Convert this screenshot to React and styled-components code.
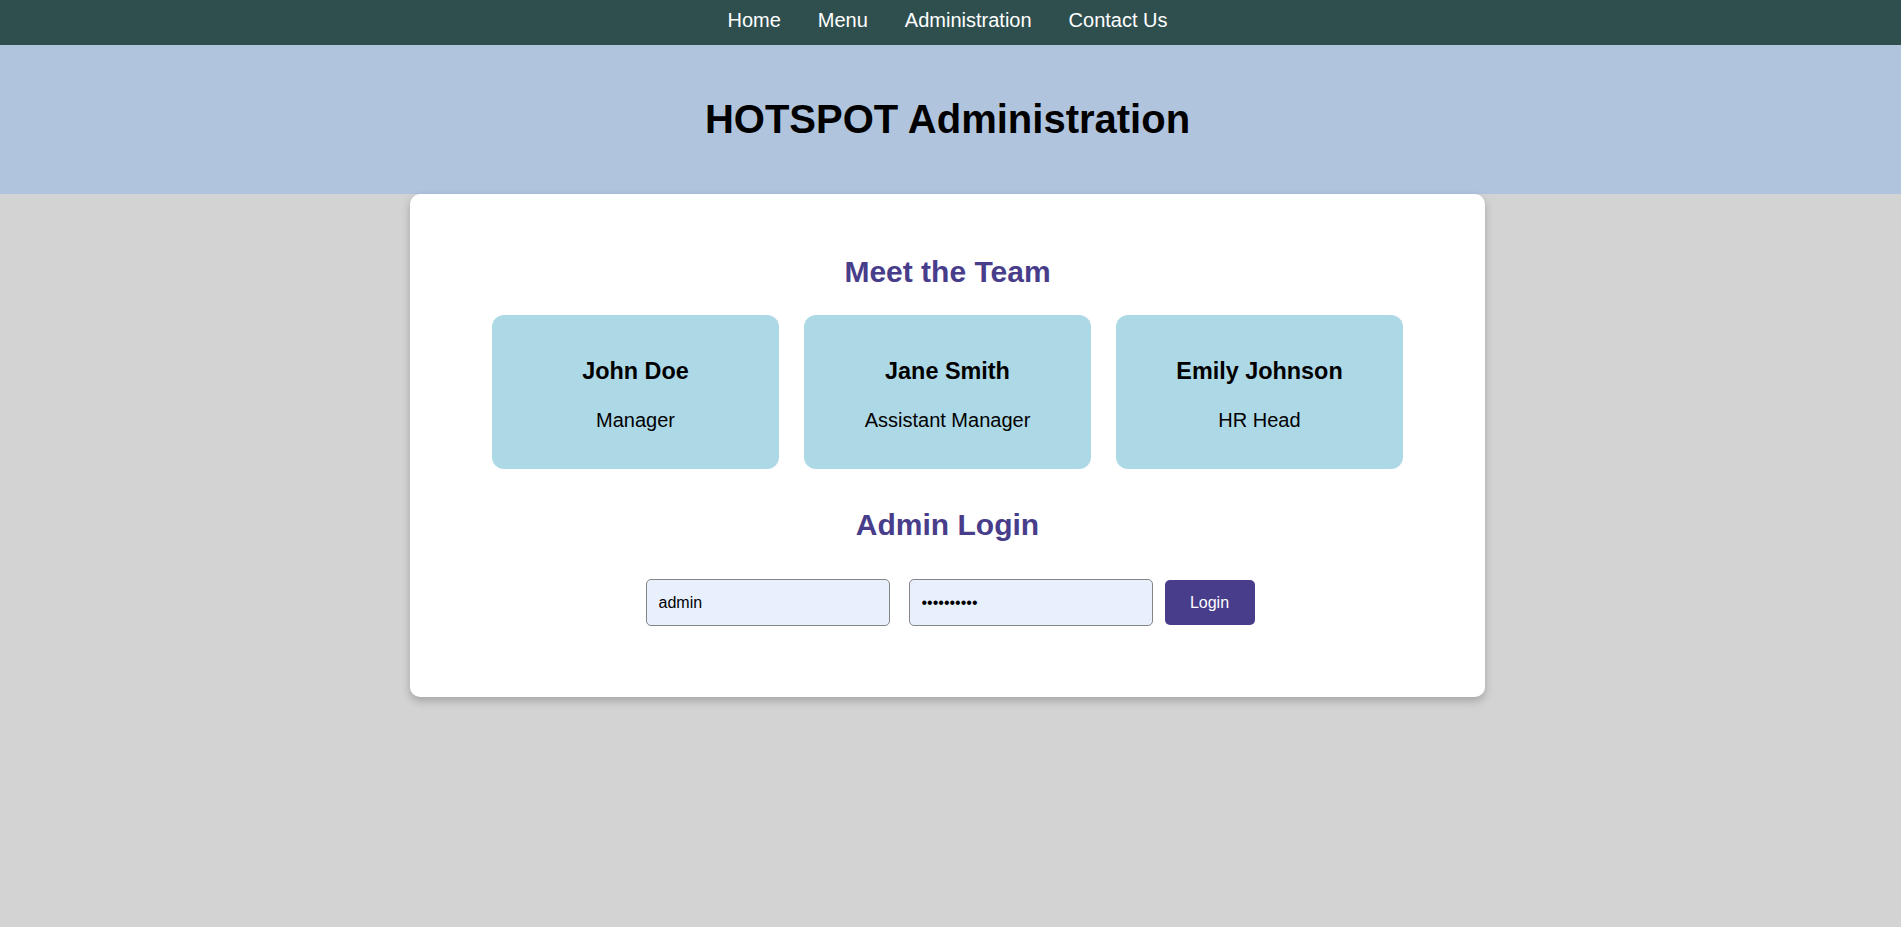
import React from "react";
import styled, { createGlobalStyle } from "styled-components";

const GlobalStyle = createGlobalStyle`
  html, body {
    margin: 0;
    padding: 0;
    min-height: 100%;
    background: #d3d3d3;
  }
  body {
    font-family: "Liberation Sans", Arial, sans-serif;
    color: #000;
  }
`;

const Page = styled.div`
  min-height: 927px;
  background: #d3d3d3;
`;

const NavBar = styled.nav`
  height: 45px;
  box-sizing: border-box;
  padding: 9px 6px 0 0;
  background: #2f4f4f;
  display: flex;
  justify-content: center;
  gap: 37px;
`;

const NavLink = styled.a`
  color: #ffffff;
  font-size: 20px;
  line-height: 23px;
  text-decoration: none;
  cursor: pointer;
`;

const Header = styled.header`
  background: #b0c4de;
  padding: 51px 6px 52px 0;
  text-align: center;
`;

const Title = styled.h1`
  margin: 0;
  font-size: 40px;
  line-height: 46px;
  font-weight: bold;
`;

const Main = styled.main`
  display: flex;
  justify-content: center;
  padding-right: 6px;
`;

const Panel = styled.section`
  width: 1075px;
  box-sizing: border-box;
  background: #ffffff;
  border-radius: 10px;
  box-shadow: 0 4px 8px rgba(0, 0, 0, 0.22);
  padding: 61px 0 71px;
  display: flex;
  flex-direction: column;
  align-items: center;
`;

const SectionTitle = styled.h2`
  margin: ${(p) => p.$top || 0}px 0 0;
  font-size: 30px;
  line-height: 34px;
  font-weight: bold;
  color: #483d8b;
`;

const TeamRow = styled.div`
  margin-top: 26px;
  display: flex;
  gap: 25px;
`;

const MemberCard = styled.div`
  width: 287px;
  height: 154px;
  box-sizing: border-box;
  background: #add8e6;
  border-radius: 12px;
  padding: 43px 10px 0;
  display: flex;
  flex-direction: column;
  align-items: center;
`;

const MemberName = styled.h3`
  margin: 0 0 24px;
  font-size: 23.4px;
  line-height: 27px;
  font-weight: bold;
`;

const MemberRole = styled.p`
  margin: 0;
  font-size: 20px;
  line-height: 23px;
`;

const LoginRow = styled.form`
  margin-top: 37px;
  padding-left: 5px;
  display: flex;
  align-items: center;
`;

const TextInput = styled.input`
  width: 244px;
  height: 47px;
  box-sizing: border-box;
  padding: 0 12px;
  margin-right: ${(p) => p.$gap}px;
  border: 1px solid #858585;
  border-radius: 5px;
  background: #e8f0fe;
  font-family: "Liberation Sans", Arial, sans-serif;
  font-size: 16px;
  color: #000;
  outline: none;
`;

const LoginButton = styled.button`
  width: 90px;
  height: 45px;
  border: none;
  border-radius: 5px;
  background: #483d8b;
  color: #ffffff;
  font-family: "Liberation Sans", Arial, sans-serif;
  font-size: 16px;
  cursor: pointer;
`;

const team = [
  { name: "John Doe", role: "Manager" },
  { name: "Jane Smith", role: "Assistant Manager" },
  { name: "Emily Johnson", role: "HR Head" },
];

export default function App() {
  return (
    <Page>
      <GlobalStyle />
      <NavBar>
        <NavLink>Home</NavLink>
        <NavLink>Menu</NavLink>
        <NavLink>Administration</NavLink>
        <NavLink>Contact Us</NavLink>
      </NavBar>
      <Header>
        <Title>HOTSPOT Administration</Title>
      </Header>
      <Main>
        <Panel>
          <SectionTitle>Meet the Team</SectionTitle>
          <TeamRow>
            {team.map((m) => (
              <MemberCard key={m.name}>
                <MemberName>{m.name}</MemberName>
                <MemberRole>{m.role}</MemberRole>
              </MemberCard>
            ))}
          </TeamRow>
          <SectionTitle $top={39}>Admin Login</SectionTitle>
          <LoginRow onSubmit={(e) => e.preventDefault()}>
            <TextInput type="text" defaultValue="admin" $gap={19} />
            <TextInput type="password" defaultValue="password12" $gap={12} />
            <LoginButton type="submit">Login</LoginButton>
          </LoginRow>
        </Panel>
      </Main>
    </Page>
  );
}
